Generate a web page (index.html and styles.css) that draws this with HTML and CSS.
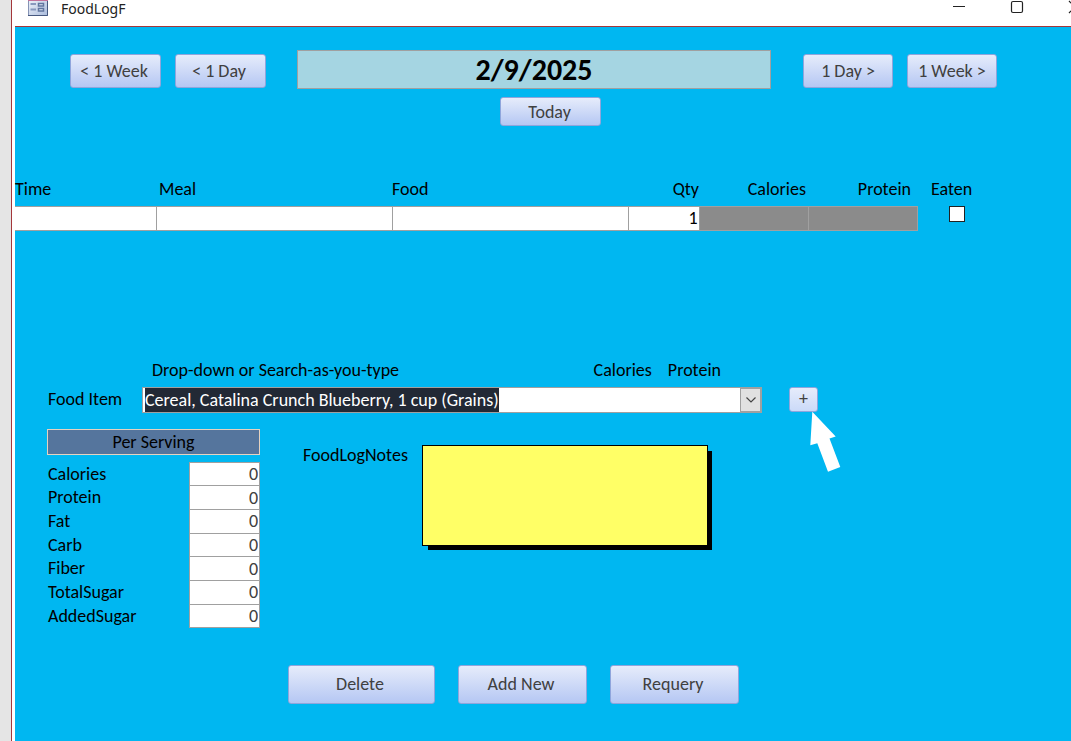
FILE: index.html
```html
<!DOCTYPE html>
<html lang="en">
<head>
<meta charset="utf-8">
<title>FoodLogF</title>
<link rel="stylesheet" href="styles.css">
</head>
<body>
<div class="window">
  <header class="titlebar">
    <svg class="app-icon" width="20" height="16" viewBox="0 0 20 16" aria-hidden="true">
      <defs><linearGradient id="ic" x1="0" y1="0" x2="1" y2="1"><stop offset="0" stop-color="#f4f6fb"/><stop offset="1" stop-color="#a9bbdc"/></linearGradient></defs>
      <rect x="0.5" y="-3" width="19" height="18.500" fill="url(#ic)" stroke="#8593b5"/>
      <path d="M0 15.500H19.500V0" fill="none" stroke="#46587f"/>
      <path d="M0 0.500H20" stroke="#c2719a"/>
      <path d="M2.500 4H8M2.500 9.500H8" stroke="#8898bd" stroke-width="1.800"/>
      <rect x="10.500" y="3.500" width="5" height="2.500" fill="#dfe6f3" stroke="#60759f" stroke-width="1.500"/>
      <rect x="10.500" y="8.500" width="5" height="2.500" fill="#dfe6f3" stroke="#60759f" stroke-width="1.500"/>
    </svg>
    <h1 class="title">FoodLogF</h1>
    <div class="controls">
      <button class="control" type="button" aria-label="Minimize"><svg width="14" height="14" viewBox="0 0 14 14"><path d="M1 6.500H13" stroke="#222"/></svg></button>
      <button class="control" type="button" aria-label="Maximize"><svg width="14" height="14" viewBox="0 0 14 14"><rect x="1.500" y="1.500" width="11" height="11" rx="1.500" fill="none" stroke="#222" stroke-width="1.200"/></svg></button>
      <button class="control" type="button" aria-label="Close"><svg width="14" height="14" viewBox="0 0 14 14"><path d="M1 1L13 13M13 1L1 13" stroke="#222" stroke-width="1.200"/></svg></button>
    </div>
  </header>
  <main class="form">
    <nav class="date-nav" aria-label="Date">
      <button class="btn nav-btn" type="button">&lt; 1 Week</button>
      <button class="btn nav-btn" type="button">&lt; 1 Day</button>
      <input class="date" type="text" value="2/9/2025" aria-label="Log date">
      <button class="btn nav-btn next" type="button">1 Day &gt;</button>
      <button class="btn nav-btn next" type="button">1 Week &gt;</button>
    </nav>
    <div class="today-row"><button class="btn today" type="button">Today</button></div>

    <table class="log">
      <colgroup><col class="c-time"><col class="c-meal"><col class="c-food"><col class="c-qty"><col class="c-num"><col class="c-num"><col class="c-eaten"></colgroup>
      <thead>
        <tr><th class="first">Time</th><th>Meal</th><th class="food">Food</th><th class="num qty">Qty</th><th class="num">Calories</th><th class="num protein">Protein</th><th class="eaten">Eaten</th></tr>
      </thead>
      <tbody>
        <tr>
          <td class="cell"><input type="text" aria-label="Time"></td>
          <td class="cell"><input type="text" aria-label="Meal"></td>
          <td class="cell"><input type="text" aria-label="Food"></td>
          <td class="cell"><input class="right" type="text" value="1" aria-label="Qty"></td>
          <td class="cell locked"><input type="text" readonly aria-label="Calories"></td>
          <td class="cell locked"><input type="text" readonly aria-label="Protein"></td>
          <td class="check"><input type="checkbox" aria-label="Eaten"></td>
        </tr>
      </tbody>
    </table>

    <section class="picker">
      <div class="hints"><span class="hint-main">Drop-down or Search-as-you-type</span><span class="hint-cal">Calories</span><span>Protein</span></div>
      <div class="picker-row">
        <label class="picker-label" for="item">Food Item</label>
        <div class="combo">
          <input id="item" type="text" value="Cereal, Catalina Crunch Blueberry, 1 cup (Grains)">
          <button class="drop" type="button" aria-label="Open list"><svg width="12" height="8" viewBox="0 0 12 8"><path d="M1.500 1.500L6 6L10.500 1.500" fill="none" stroke="#444" stroke-width="1.200"/></svg></button>
        </div>
        <div class="add-wrap">
          <button class="btn add" type="button">+</button>
          <svg class="pointer" width="32" height="62" viewBox="0 0 32 62" aria-hidden="true"><path d="M2.300 .7L25.700 25.500L19.500 27.500L30.300 56L18 60.700L7.300 32.300L.3 34.300Z" fill="#fff"/></svg>
        </div>
      </div>
    </section>

    <div class="details">
      <section class="serving">
        <h2 class="serving-title">Per Serving</h2>
        <div class="facts">
          <label for="f1">Calories</label><input id="f1" type="text" value="0">
          <label for="f2">Protein</label><input id="f2" type="text" value="0">
          <label for="f3">Fat</label><input id="f3" type="text" value="0">
          <label for="f4">Carb</label><input id="f4" type="text" value="0">
          <label for="f5">Fiber</label><input id="f5" type="text" value="0">
          <label for="f6">TotalSugar</label><input id="f6" type="text" value="0">
          <label for="f7">AddedSugar</label><input id="f7" type="text" value="0">
        </div>
      </section>
      <label class="notes-label" for="notes">FoodLogNotes</label>
      <textarea class="notes" id="notes"></textarea>
    </div>

    <footer class="actions">
      <button class="btn action delete" type="button">Delete</button>
      <button class="btn action" type="button">Add New</button>
      <button class="btn action" type="button">Requery</button>
    </footer>
  </main>
</div>
<script src="form.js"></script>
</body>
</html>
```
FILE: styles.css
```css
* { box-sizing: border-box; }
body {
  margin: 0;
  padding-left: 11px;
  background: #e5e5e5;
  color: #000;
  font: 18px/20px Carlito, Lato, "Noto Sans", sans-serif;
}
button, input, textarea { font: inherit; color: inherit; border-radius: 0; }
.window {
  display: flex;
  flex-direction: column;
  min-height: 100vh;
  overflow: hidden;
  padding-left: 3px;
  border-left: 1px solid #a4373a;
  background: #fff;
}
.titlebar {
  display: flex;
  align-items: flex-start;
  height: 27px;
  padding-left: 13px;
  border-bottom: 1px solid #a4373a;
}
.app-icon { flex: none; }
.title { flex: 1; margin: 0 0 0 13px; font: 14px/17px "Noto Sans", sans-serif; color: #222; }
.controls { display: flex; gap: 44px; margin-right: -11px; }
.control { display: flex; padding: 0; border: 0; background: none; }
.form { flex: 1; padding-top: 23px; background: #00b7f1; }
.btn {
  padding: 0;
  border: 1px solid #8fa5dc;
  border-radius: 3px;
  background: linear-gradient(#e6ecfb, #b5c7f3);
  color: #404040;
}
.date-nav { display: flex; align-items: flex-start; gap: 14px; padding: 0 74px 0 55px; }
.nav-btn { flex: none; width: 91px; height: 34px; margin-top: 4px; padding-right: 3px; }
.next { width: 90px; padding-right: 0; }
.date {
  flex: 1;
  min-width: 0;
  height: 39px;
  margin: 0 18px 0 17px;
  border: 1px solid #a0a0a0;
  background: #a5d5e2;
  font-size: 30px;
  font-weight: bold;
  text-align: center;
}
.today-row { display: flex; justify-content: center; padding: 8px 40px 0 55px; }
.today { width: 101px; height: 29px; padding-right: 2px; }

.log { width: 100%; margin-top: 52px; table-layout: fixed; border-collapse: collapse; }
.c-time { width: 141px; }
.c-meal { width: 236px; }
.c-qty { width: 71px; }
.c-num { width: 109px; }
.c-eaten { width: 154px; }
.log th { height: 28px; padding: 0 2px 7px 3px; font-weight: normal; text-align: left; vertical-align: bottom; }
.log th.first, .log th.food { padding-left: 0; }
.log th.num { text-align: right; }
.log th.qty { padding-right: 0; }
.log th.protein { padding-right: 6px; }
.log th.eaten { padding-left: 14px; }
.cell { height: 24px; padding: 0; border: 1px solid #a0a0a0; background: #fff; }
.cell:first-child { border-left: 0; }
.cell input { display: block; width: 100%; height: 23px; padding: 0 2px; border: 0; background: none; }
.cell input.right { padding: 0 1px; text-align: right; }
.locked { background: #8b8b8b; }
.check { padding: 0 0 0 31px; vertical-align: top; }
.check input {
  display: block;
  appearance: none;
  width: 16px;
  height: 16px;
  margin: 0;
  border: 1px solid #222;
  background: #fff;
}

.picker { padding: 129px 253px 0 33px; }
.hints { display: flex; padding: 0 97px 0 104px; }
.hint-main { flex: 1; }
.hint-cal { margin-right: 16px; }
.picker-row { display: flex; margin-top: 7px; }
.picker-label { flex: none; width: 94px; line-height: 24px; }
.combo { flex: 1; display: flex; min-width: 0; height: 26px; border: 1px solid #a0a0a0; background: #fff; }
.combo input { flex: 1; min-width: 0; height: 24px; padding: 0 0 0 2px; border: 0; outline: 0; background: none; line-height: 24px; }
.combo input::selection { background: #222935; color: #fff; }
.drop { display: flex; align-items: center; justify-content: center; width: 21px; padding: 0; border: 1px solid #a0a0a0; background: #e1e1e1; }
.add-wrap { position: relative; margin-left: 27px; }
.add { display: block; width: 29px; height: 25px; background: linear-gradient(#e6ecfb, #cbdaf8); }
.pointer { position: absolute; left: 21px; top: 24px; }

.details { display: flex; align-items: flex-start; padding: 16px 0 0 32px; }
.serving { width: 213px; }
.serving-title {
  margin: 0;
  border: 1px solid #e6d2c0;
  background: #55759d;
  font-size: 18px;
  font-weight: normal;
  line-height: 24px;
  text-align: center;
}
.facts { display: grid; grid-template-columns: 1fr 71px; grid-template-rows: repeat(7, minmax(0, 1fr)); height: 166px; margin: 7px 0 3px; }
.facts label { padding-left: 1px; line-height: 24px; }
.facts input { width: 100%; height: calc(100% + 1px); padding: 0 1px; border: 1px solid #a0a0a0; background: #fff; color: #404040; text-align: right; }
.notes-label { width: 119px; margin: 16px 0 0 43px; }
.notes {
  width: 286px;
  height: 101px;
  margin-top: 16px;
  border: 1px solid #000;
  background: #ffff66;
  box-shadow: 5px 5px 0 -1px #000;
  outline: 0;
  resize: none;
}
.actions { display: flex; gap: 23px; padding: 34px 0 37px 273px; }
.action { width: 129px; height: 39px; padding-right: 3px; }
.delete { width: 147px; }
```
FILE: form.js
```js
const item = document.getElementById("item");
item.focus();
item.select();
```
